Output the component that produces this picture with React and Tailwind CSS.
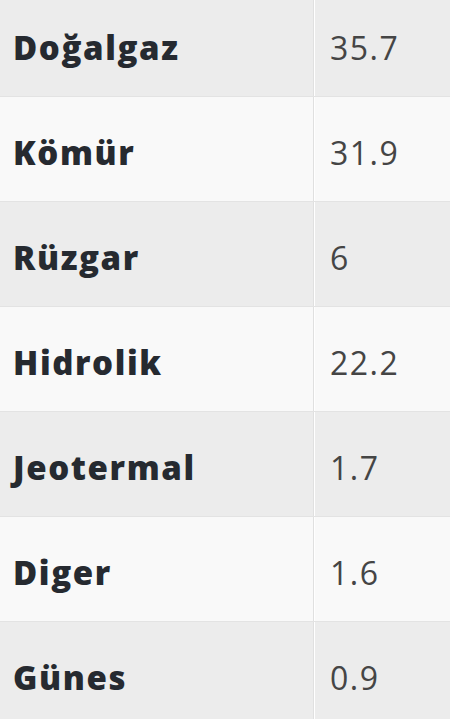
import React from "react";

const ROWS = [
  ["Doğalgaz", "35.7"],
  ["Kömür", "31.9"],
  ["Rüzgar", "6"],
  ["Hidrolik", "22.2"],
  ["Jeotermal", "1.7"],
  ["Diger", "1.6"],
  ["Günes", "0.9"],
];

export default function App() {
  return (
    <div
      className="w-[450px] h-[719px] overflow-hidden bg-[#f9f9f9]"
      style={{ fontFamily: '"Open Sans", "Noto Sans", sans-serif' }}
    >
      <div className="-mt-[8px] flex flex-col">
        {ROWS.map(([name, value], i) => (
          <div
            key={name}
            className={`flex h-[105px] border-b border-[#e3e3e3] ${i % 2 === 0 ? "bg-[#ececec]" : "bg-[#f9f9f9]"}`}
          >
            <div className="w-[314px] flex items-center pl-[13px] pt-[7px] border-r border-[#e0e0e0]">
              <span className="text-[33px] leading-none font-extrabold tracking-[1.6px] text-[#262a30]">{name}</span>
            </div>
            <div className="flex-1 flex items-center pl-[15px] pt-[7px] border-l border-white">
              <span className="text-[32px] leading-none tracking-[1.5px] text-[#454545]">{value}</span>
            </div>
          </div>
        ))}
      </div>
    </div>
  );
}
